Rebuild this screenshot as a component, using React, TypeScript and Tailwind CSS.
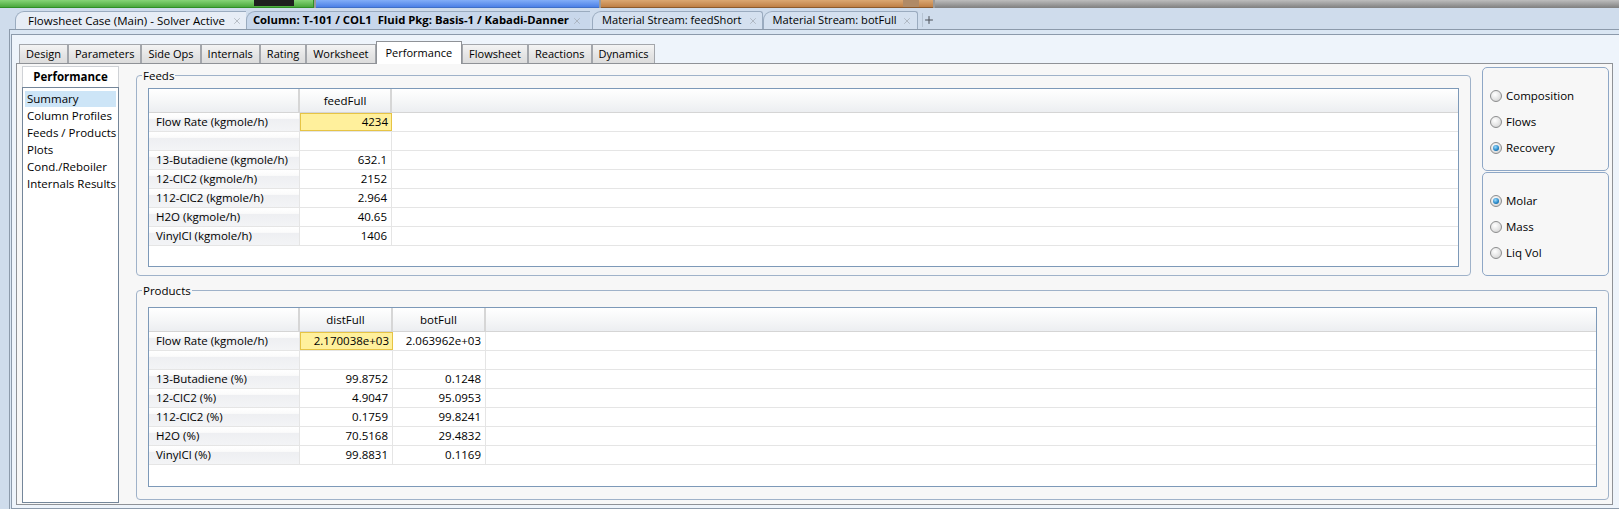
import { X, Plus } from 'lucide-react';

const feedRows = [
  ['Flow Rate (kgmole/h)', '4234'],
  ['', ''],
  ['13-Butadiene (kgmole/h)', '632.1'],
  ['12-ClC2 (kgmole/h)', '2152'],
  ['112-ClC2 (kgmole/h)', '2.964'],
  ['H2O (kgmole/h)', '40.65'],
  ['VinylCl (kgmole/h)', '1406'],
];

const productRows = [
  ['Flow Rate (kgmole/h)', '2.170038e+03', '2.063962e+03'],
  ['', '', ''],
  ['13-Butadiene (%)', '99.8752', '0.1248'],
  ['12-ClC2 (%)', '4.9047', '95.0953'],
  ['112-ClC2 (%)', '0.1759', '99.8241'],
  ['H2O (%)', '70.5168', '29.4832'],
  ['VinylCl (%)', '99.8831', '0.1169'],
];

const pageTabs = ['Design', 'Parameters', 'Side Ops', 'Internals', 'Rating', 'Worksheet', 'Performance', 'Flowsheet', 'Reactions', 'Dynamics'];
const navItems = ['Summary', 'Column Profiles', 'Feeds / Products', 'Plots', 'Cond./Reboiler', 'Internals Results'];

function Grid({ cols, rows, colW, height }: { cols: string[]; rows: string[][]; colW: string; height: string }) {
  return (
    <div className={`${height} overflow-hidden border border-[#7d99b8] bg-white`}>
      <div className="flex h-[24px] border-b border-[#d5d5d5] bg-[linear-gradient(#ffffff,#f6f7f8_50%,#eceef1)]">
        <div className="w-[151px] shrink-0 border-r-2 border-[#d6d6d6]" />
        {cols.map((c) => (
          <div key={c} className={`${colW} flex shrink-0 items-center justify-center border-r-2 border-[#d6d6d6]`}>
            {c}
          </div>
        ))}
      </div>
      {rows.map((r, i) => (
        <div key={i} className="flex h-[19px] border-b border-[#e5e5e5]">
          <div className="flex w-[151px] shrink-0 items-center border-r border-[#e5e5e5] bg-[linear-gradient(#ffffff,#fbfbfb_30%,#eeeff2_35%,#f3f4f6)] pl-[7px]">
            {r[0]}
          </div>
          {r.slice(1).map((v, j) => (
            <div
              key={j}
              className={
                i === 0 && j === 0
                  ? `${colW} flex shrink-0 items-center justify-end border border-[#e6c445] bg-[#fff09c] pr-[3px]`
                  : `${colW} flex shrink-0 items-center justify-end border-r border-[#e5e5e5] pr-[4px]`
              }
            >
              {v}
            </div>
          ))}
        </div>
      ))}
    </div>
  );
}

function Radio({ label, on }: { label: string; on?: boolean }) {
  return (
    <div className="flex h-[26px] items-center gap-[4px]">
      <span className="flex h-[12px] w-[12px] items-center justify-center rounded-full border border-[#8c8d8e] bg-[radial-gradient(circle_at_40%_35%,#ffffff,#e4e4e4_55%,#c7c7c7)]">
        {on && <span className="h-[6px] w-[6px] rounded-full bg-[radial-gradient(circle_at_40%_35%,#9bdcff,#2283c4_60%,#0b4a78)]" />}
      </span>
      <span>{label}</span>
    </div>
  );
}

function DocTab({ label, className, textClass }: { label: string; className: string; textClass?: string }) {
  return (
    <div className={`flex h-[18px] items-center rounded-tl-[9px] border-l border-t border-[#9aabbf] ${className}`}>
      <span className={`whitespace-pre ${textClass ?? ''}`}>{label}</span>
      <X size={10} strokeWidth={1.5} className="text-[#9aa0a8]" />
    </div>
  );
}

export default function App() {
  return (
    <div className="flex h-[509px] w-[1619px] flex-col overflow-hidden bg-[#cfdcec] font-['Open_Sans',sans-serif] text-[11.5px] text-black">
      {/* window strip */}
      <div className="flex h-[8px] gap-[2px] bg-[#9a9a9a]">
        <div className="flex w-[314px] justify-end border-b border-r border-[#2f8f26] bg-[linear-gradient(#86d477,#4aa83c)] pr-[19px]">
          <div className="h-[6px] w-[40px] bg-[#1f1f1f]" />
        </div>
        <div className="w-[283px] border-b border-[#3f6fc8] bg-[linear-gradient(#82aef8,#4c80e6)]" />
        <div className="flex w-[332px] justify-end border-b border-[#8c5a2c] bg-[linear-gradient(#dba771,#bf7f45)] pr-[14px]">
          <div className="h-[7px] w-[16px] bg-[#b08a66]" />
        </div>
        <div className="flex-1 bg-[linear-gradient(#bdbdbd,#7f7f7f)]" />
      </div>

      {/* document tabs */}
      <div className="flex h-[21px] items-end pl-[15px]">
        <DocTab label="Flowsheet Case (Main) - Solver Active" className="gap-[7px] bg-[#e7edf6] pl-[12px] pr-[4px]" />
        <DocTab
          label="Column: T-101 / COL1  Fluid Pkg: Basis-1 / Kabadi-Danner"
          className="gap-[3px] bg-[#c8d7eb] pl-[6px] pr-[8px]"
          textClass="text-[11.3px] font-bold"
        />
        <DocTab
          label="Material Stream: feedShort"
          className="ml-[2px] gap-[6px] rounded-tr-[3px] border-r bg-[#d4e0ef] pl-[9px] pr-[4px]"
          textClass="text-[11.1px]"
        />
        <DocTab
          label="Material Stream: botFull"
          className="gap-[5px] rounded-tr-[3px] border-r bg-[#d4e0ef] pl-[9px] pr-[5px]"
          textClass="text-[11.1px]"
        />
        <div className="mb-[2px] ml-[4px] flex h-[14px] w-[13px] items-center justify-center border-l border-[#b7c4d3]">
          <Plus size={12} strokeWidth={2} className="text-[#4a4f57]" />
        </div>
      </div>

      {/* frames */}
      <div className="ml-[9px] flex flex-1 flex-col border-l border-t border-[#8c9aab] bg-[#dae6f3] pl-[1px] pt-[4px]">
        <div className="flex flex-1 flex-col border-b border-l border-t border-[#8c9aab] bg-[#eef4fb] pl-[4px] pr-[6px]">
          <div className="flex h-[28px] items-end pl-[3px] text-[11px]">
            {pageTabs.map((t) =>
              t === 'Performance' ? (
                <div key={t} className="relative z-10 -mb-px flex h-[23px] items-center border border-b-0 border-[#8f9297] bg-white px-[9px]">
                  {t}
                </div>
              ) : (
                <div key={t} className="flex h-[19px] items-center border border-b-0 border-[#a3a6ab] bg-[linear-gradient(#f4f4f4,#e6e6e6_50%,#dcdcdc)] px-[6px]">
                  {t}
                </div>
              )
            )}
          </div>

          {/* page */}
          <div className="flex h-[442px] border border-[#8f9297] bg-[#f7f7f7] pl-[5px] pt-[2px]">
            <div className="flex w-[97px] shrink-0 flex-col">
              <div className="flex h-[21px] items-center justify-center border border-b-0 border-[#cfd2d6] bg-white font-bold">Performance</div>
              <div className="h-[416px] border border-[#74869a] bg-white px-[2px] pt-[3px]">
                {navItems.map((n, i) => (
                  <div key={n} className={`mb-[1px] flex h-[16px] items-center whitespace-nowrap pl-[2px] ${i === 0 ? 'bg-[#cde5f7]' : ''}`}>
                    {n}
                  </div>
                ))}
              </div>
            </div>

            <div className="ml-[17px] flex flex-1 flex-col pr-[3px] pt-[1px]">
              <div className="flex items-start">
                <fieldset className="mt-[1px] flex-1 rounded-[4px] border border-[#9fb2c9] px-[11px] pb-[8px] pt-[5px]">
                  <legend className="ml-[-6px] px-[1px] leading-[15px]">Feeds</legend>
                  <Grid cols={['feedFull']} rows={feedRows} colW="w-[92px]" height="h-[179px]" />
                </fieldset>
                <div className="ml-[11px] flex w-[127px] shrink-0 flex-col gap-[1px]">
                  <div className="h-[104px] rounded-[5px] border border-[#8ea7c6] pl-[7px] pt-[15px]">
                    <Radio label="Composition" />
                    <Radio label="Flows" />
                    <Radio label="Recovery" on />
                  </div>
                  <div className="h-[104px] rounded-[5px] border border-[#8ea7c6] pl-[7px] pt-[15px]">
                    <Radio label="Molar" on />
                    <Radio label="Mass" />
                    <Radio label="Liq Vol" />
                  </div>
                </div>
              </div>

              <fieldset className="mt-[7px] rounded-[4px] border border-[#9fb2c9] px-[11px] pb-[12px] pt-[9px]">
                <legend className="ml-[-6px] px-[1px] leading-[15px]">Products</legend>
                <Grid cols={['distFull', 'botFull']} rows={productRows} colW="w-[93px]" height="h-[180px]" />
              </fieldset>
            </div>
          </div>
        </div>
      </div>
    </div>
  );
}
